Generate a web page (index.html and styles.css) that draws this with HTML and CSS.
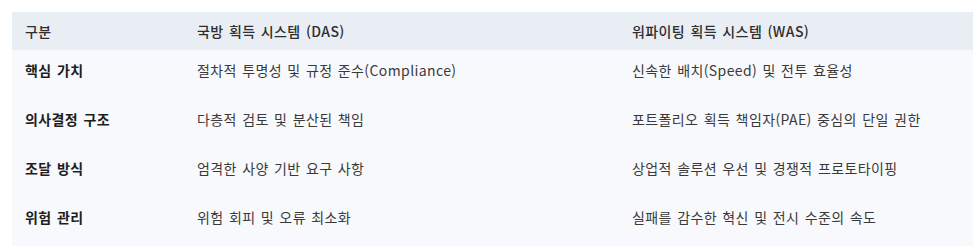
FILE: index.html
```html
<!DOCTYPE html>
<html lang="ko">
<head>
<meta charset="utf-8">
<link rel="stylesheet" href="styles.css">
</head>
<body>
<table class="compare">
  <colgroup>
    <col class="c1"><col class="c2"><col class="c3">
  </colgroup>
  <thead>
    <tr><th>구분</th><th>국방 획득 시스템 (DAS)</th><th>워파이팅 획득 시스템 (WAS)</th></tr>
  </thead>
  <tbody>
    <tr><td class="label">핵심 가치</td><td>절차적 투명성 및 규정 준수(Compliance)</td><td>신속한 배치(Speed) 및 전투 효율성</td></tr>
    <tr><td class="label">의사결정 구조</td><td>다층적 검토 및 분산된 책임</td><td>포트폴리오 획득 책임자(PAE) 중심의 단일 권한</td></tr>
    <tr><td class="label">조달 방식</td><td>엄격한 사양 기반 요구 사항</td><td>상업적 솔루션 우선 및 경쟁적 프로토타이핑</td></tr>
    <tr><td class="label">위험 관리</td><td>위험 회피 및 오류 최소화</td><td>실패를 감수한 혁신 및 전시 수준의 속도</td></tr>
  </tbody>
</table>
</body>
</html>
```
FILE: styles.css
```css
html, body { background: #ffffff; }
body {
  margin: 12px 2px 0 12px;
  font-family: "Noto Sans CJK KR", "Noto Sans", sans-serif;
  font-size: 14px;
  letter-spacing: 0.4px;
  word-spacing: 1px;
  color: #3a3a3a;
}
.compare {
  width: 961px;
  border-collapse: collapse;
  table-layout: fixed;
  background: #f8f9fc;
}
.c1 { width: 172px; }
.c2 { width: 435px; }
.c3 { width: 354px; }
.compare th {
  background: #e9edf4;
  text-align: left;
  font-weight: 500;
  color: #2e2e2e;
  height: 38px;
  padding: 0 13px;
  line-height: 20px;
  box-sizing: border-box;
}
.compare td {
  padding: 10px 13px 19px;
  line-height: 20px;
  white-space: nowrap;
}
.compare td.label {
  font-weight: 700;
  color: #1e1e1e;
}
```
